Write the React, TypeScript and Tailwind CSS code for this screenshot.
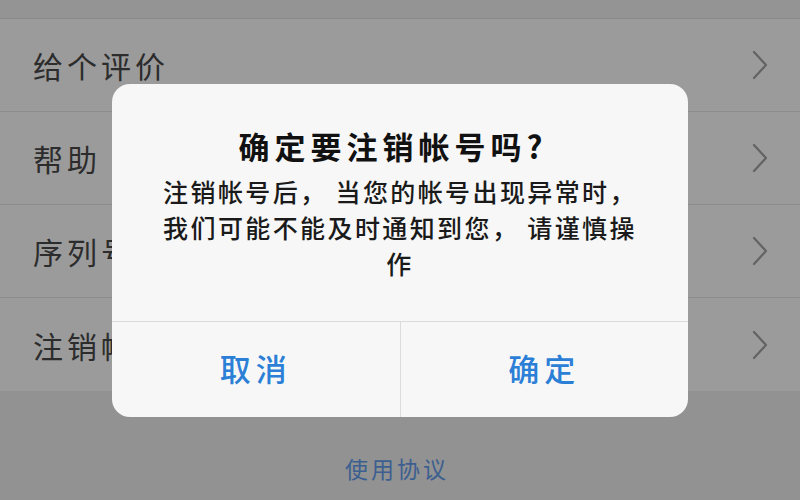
import React from 'react';

const rows = ['给个评价', '帮助', '序列号', '注销帐号'];

const Chevron = () => (
  <svg width="20" height="32" viewBox="0 0 20 32" fill="none" className="shrink-0">
    <path d="M4 3 L16 16 L4 29" stroke="#636363" strokeWidth="2.2" strokeLinecap="round" strokeLinejoin="round" />
  </svg>
);

export default function App() {
  return (
    <div
      className="relative w-[800px] h-[500px] overflow-hidden bg-[#929292] flex flex-col"
      style={{ fontFamily: '"Noto Sans CJK SC", "Noto Sans", sans-serif' }}
    >
      {/* settings list behind the dimmed overlay */}
      <div className="h-[19px] bg-[#949494] border-b border-[#888888]" />
      {rows.map((label, i) => (
        <div
          key={label}
          className={`h-[93px] bg-[#9b9b9b] flex items-center justify-between pl-[33px] pr-[30px] ${
            i < rows.length - 1 ? 'border-b border-[#8c8c8c]' : ''
          }`}
        >
          <span className="text-[30px] tracking-[4px] text-[#2c2c2c] leading-none">{label}</span>
          <Chevron />
        </div>
      ))}
      <div className="flex-1 flex items-end justify-center pb-[20px]">
        <span className="text-[23px] tracking-[3px] text-[#3c5f90] leading-none mr-[6px]">使用协议</span>
      </div>

      {/* alert dialog */}
      <div className="absolute left-[112px] top-[84px] w-[576px] h-[333px] rounded-[18px] bg-[#f7f7f7] flex flex-col">
        <div className="flex-1 flex flex-col items-center pt-[46px] border-b border-[#dcdcdc]">
          <div className="text-[31px] font-bold tracking-[5px] text-[#111] leading-none mr-[14px]">确定要注销帐号吗?</div>
          <div className="mt-[12px] text-[25px] font-medium tracking-[2.4px] text-[#1a1a1a] leading-[36px] text-center">
            注销帐号后，&nbsp;当您的帐号出现异常时，
            <br />
            我们可能不能及时通知到您，&nbsp;请谨慎操
            <br />
            作
          </div>
        </div>
        <div className="h-[95px] flex">
          <div className="flex-1 flex items-center justify-center border-r border-[#dcdcdc] pb-[4px]">
            <span className="text-[31px] font-medium tracking-[5px] text-[#2b7fd6] leading-none">取消</span>
          </div>
          <div className="flex-1 flex items-center justify-center pb-[4px]">
            <span className="text-[31px] font-medium tracking-[5px] text-[#2b7fd6] leading-none">确定</span>
          </div>
        </div>
      </div>
    </div>
  );
}
